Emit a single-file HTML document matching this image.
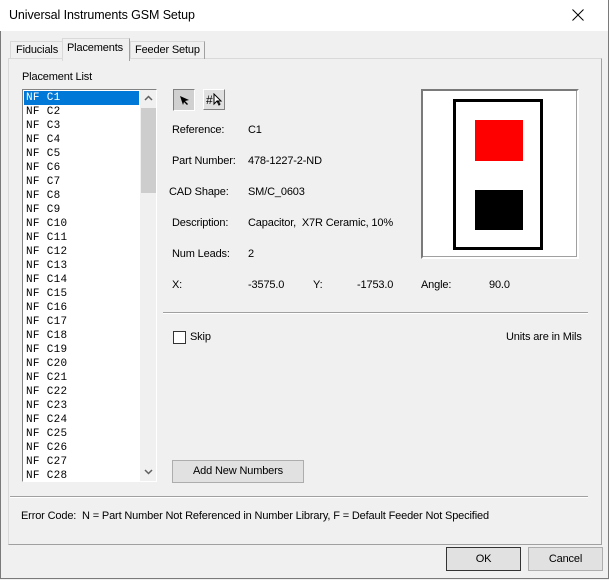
<!DOCTYPE html>
<html><head><style>
body{margin:0;width:609px;height:580px;overflow:hidden;background:#f0f0f0;font-family:"Liberation Sans",Arial,sans-serif;font-size:11px;letter-spacing:-0.15px;color:#000;position:relative}
.a{position:absolute;white-space:nowrap}
.btn{position:absolute;background:#e1e1e1;border:1px solid #adadad;text-align:center;box-sizing:border-box}
.li{height:14px;line-height:14px;padding-left:2px;font-family:"Liberation Mono",monospace;font-size:11px;letter-spacing:0.3px;white-space:pre}
</style></head><body>
<div class="a" style="left:0;top:0;width:607px;height:578px;border:1px solid #7a7a7a;border-top:none"></div>
<div class="a" style="left:0;top:0;width:608px;height:31px;background:#fff"></div>
<div class="a" style="left:9px;top:8px;font-size:12.5px;letter-spacing:-0.1px">Universal Instruments GSM Setup</div>
<svg class="a" style="left:572px;top:9px" width="12" height="12"><path d="M0.5 0.5 L11.5 11.5 M11.5 0.5 L0.5 11.5" stroke="#000" stroke-width="1"/></svg>
<!-- tab panel -->
<div class="a" style="left:8px;top:58px;width:592px;height:485px;border:1px solid #d9d9d9;border-right-color:#a0a0a0;border-bottom-color:#a0a0a0;background:#f0f0f0"></div>
<div class="a" style="left:10px;top:41px;width:47px;height:17px;border:1px solid #d9d9d9;border-bottom:none;padding-left:5px;line-height:17px">Fiducials</div>
<div class="a" style="left:130px;top:41px;width:69px;height:17px;border:1px solid #d9d9d9;border-right-color:#a0a0a0;border-bottom:none;padding-left:4px;line-height:17px">Feeder Setup</div>
<div class="a" style="left:62px;top:38px;width:62px;height:22px;border:1px solid #d9d9d9;border-right-color:#a0a0a0;border-bottom:none;background:#f0f0f0;padding-left:4px;line-height:18px">Placements</div>
<div class="a" style="left:22px;top:71px">Placement List</div>
<!-- list -->
<div class="a" style="left:22px;top:89px;width:133px;height:391px;border:1px solid #828282;border-right-color:#fff;border-bottom-color:#fff;background:#fff;overflow:hidden">
<div style="position:absolute;left:1px;top:1px;width:115px">
<div class="li" style="background:#0078d7;color:#fff">NF C1</div>
<div class="li">NF C2</div><div class="li">NF C3</div><div class="li">NF C4</div><div class="li">NF C5</div><div class="li">NF C6</div><div class="li">NF C7</div><div class="li">NF C8</div><div class="li">NF C9</div><div class="li">NF C10</div><div class="li">NF C11</div><div class="li">NF C12</div><div class="li">NF C13</div><div class="li">NF C14</div><div class="li">NF C15</div><div class="li">NF C16</div><div class="li">NF C17</div><div class="li">NF C18</div><div class="li">NF C19</div><div class="li">NF C20</div><div class="li">NF C21</div><div class="li">NF C22</div><div class="li">NF C23</div><div class="li">NF C24</div><div class="li">NF C25</div><div class="li">NF C26</div><div class="li">NF C27</div><div class="li">NF C28</div>
</div>
<div class="a" style="left:117px;top:0;width:17px;height:391px;background:#f0f0f0"></div>
<div class="a" style="left:118px;top:18px;width:15px;height:85px;background:#cdcdcd"></div>
<svg class="a" style="left:121px;top:5px" width="9" height="6"><path d="M1 5 L4.5 1.5 L8 5" stroke="#606060" stroke-width="1.5" fill="none"/></svg>
<svg class="a" style="left:121px;top:379px" width="9" height="6"><path d="M1 1 L4.5 4.5 L8 1" stroke="#606060" stroke-width="1.5" fill="none"/></svg>
</div>
<!-- tool buttons -->
<div class="a" style="left:173px;top:89px;width:20px;height:20px;border:1px solid #808080;border-right-color:#fff;border-bottom-color:#fff;background:#d0d0d0"><svg width="20" height="20"><path d="M6 6 L15 10 L11 11 L14 14 L13 15 L10 12 L9 15 Z" fill="#000"/></svg></div>
<div class="a" style="left:203px;top:89px;width:22px;height:21px;border:1px solid #fff;border-right-color:#808080;border-bottom-color:#808080;background:#e0e0e0;font-size:12px;line-height:20px;padding-left:2px;box-sizing:border-box">#<svg width="10" height="14" style="vertical-align:-3px"><path d="M1 1 L1 11 L4 8 L6 12 L7 11 L5 8 L8 8 Z" fill="#fff" stroke="#000"/></svg></div>
<!-- fields -->
<div class="a" style="left:172px;top:124px">Reference:</div><div class="a" style="left:248px;top:124px">C1</div>
<div class="a" style="left:172px;top:155px">Part Number:</div><div class="a" style="left:248px;top:155px">478-1227-2-ND</div>
<div class="a" style="left:169px;top:186px">CAD Shape:</div><div class="a" style="left:248px;top:186px">SM/C_0603</div>
<div class="a" style="left:172px;top:217px">Description:</div><div class="a" style="left:248px;top:217px">Capacitor,&nbsp; X7R Ceramic, 10%</div>
<div class="a" style="left:172px;top:248px">Num Leads:</div><div class="a" style="left:248px;top:248px">2</div>
<div class="a" style="left:172px;top:279px">X:</div><div class="a" style="left:248px;top:279px">-3575.0</div>
<div class="a" style="left:313px;top:279px">Y:</div><div class="a" style="left:357px;top:279px">-1753.0</div>
<div class="a" style="left:421px;top:279px">Angle:</div><div class="a" style="left:489px;top:279px">90.0</div>
<!-- preview -->
<div class="a" style="left:421px;top:89px;width:154px;height:166px;border:2px solid #7a7a7a;border-right-color:#fff;border-bottom-color:#fff;background:#fff"></div>
<div class="a" style="left:423px;top:91px;width:153px;height:165px;border:1px solid #a0a0a0;border-top:none;border-left:none"></div>
<div class="a" style="left:453px;top:99px;width:84px;height:145px;border:3.5px solid #000"></div>
<div class="a" style="left:475px;top:120px;width:48px;height:41px;background:#f00"></div>
<div class="a" style="left:475px;top:190px;width:48px;height:40px;background:#000"></div>
<!-- separators -->
<div class="a" style="left:163px;top:312px;width:425px;height:1px;background:#a0a0a0;border-bottom:1px solid #fff"></div>
<div class="a" style="left:173px;top:331px;width:11px;height:11px;border:1px solid #333;background:#fff"></div>
<div class="a" style="left:190px;top:331px">Skip</div>
<div class="a" style="left:506px;top:331px">Units are in Mils</div>
<div class="btn" style="left:172px;top:460px;width:132px;height:23px;line-height:21px">Add New Numbers</div>
<div class="a" style="left:10px;top:496px;width:578px;height:1px;background:#a0a0a0;border-bottom:1px solid #fff"></div>
<div class="a" style="left:21px;top:510px">Error Code:&nbsp; N = Part Number Not Referenced in Number Library, F = Default Feeder Not Specified</div>
<div class="btn" style="left:446px;top:547px;width:75px;height:24px;line-height:22px;border-color:#333">OK</div>
<div class="btn" style="left:528px;top:547px;width:75px;height:24px;line-height:22px">Cancel</div>
</body></html>
